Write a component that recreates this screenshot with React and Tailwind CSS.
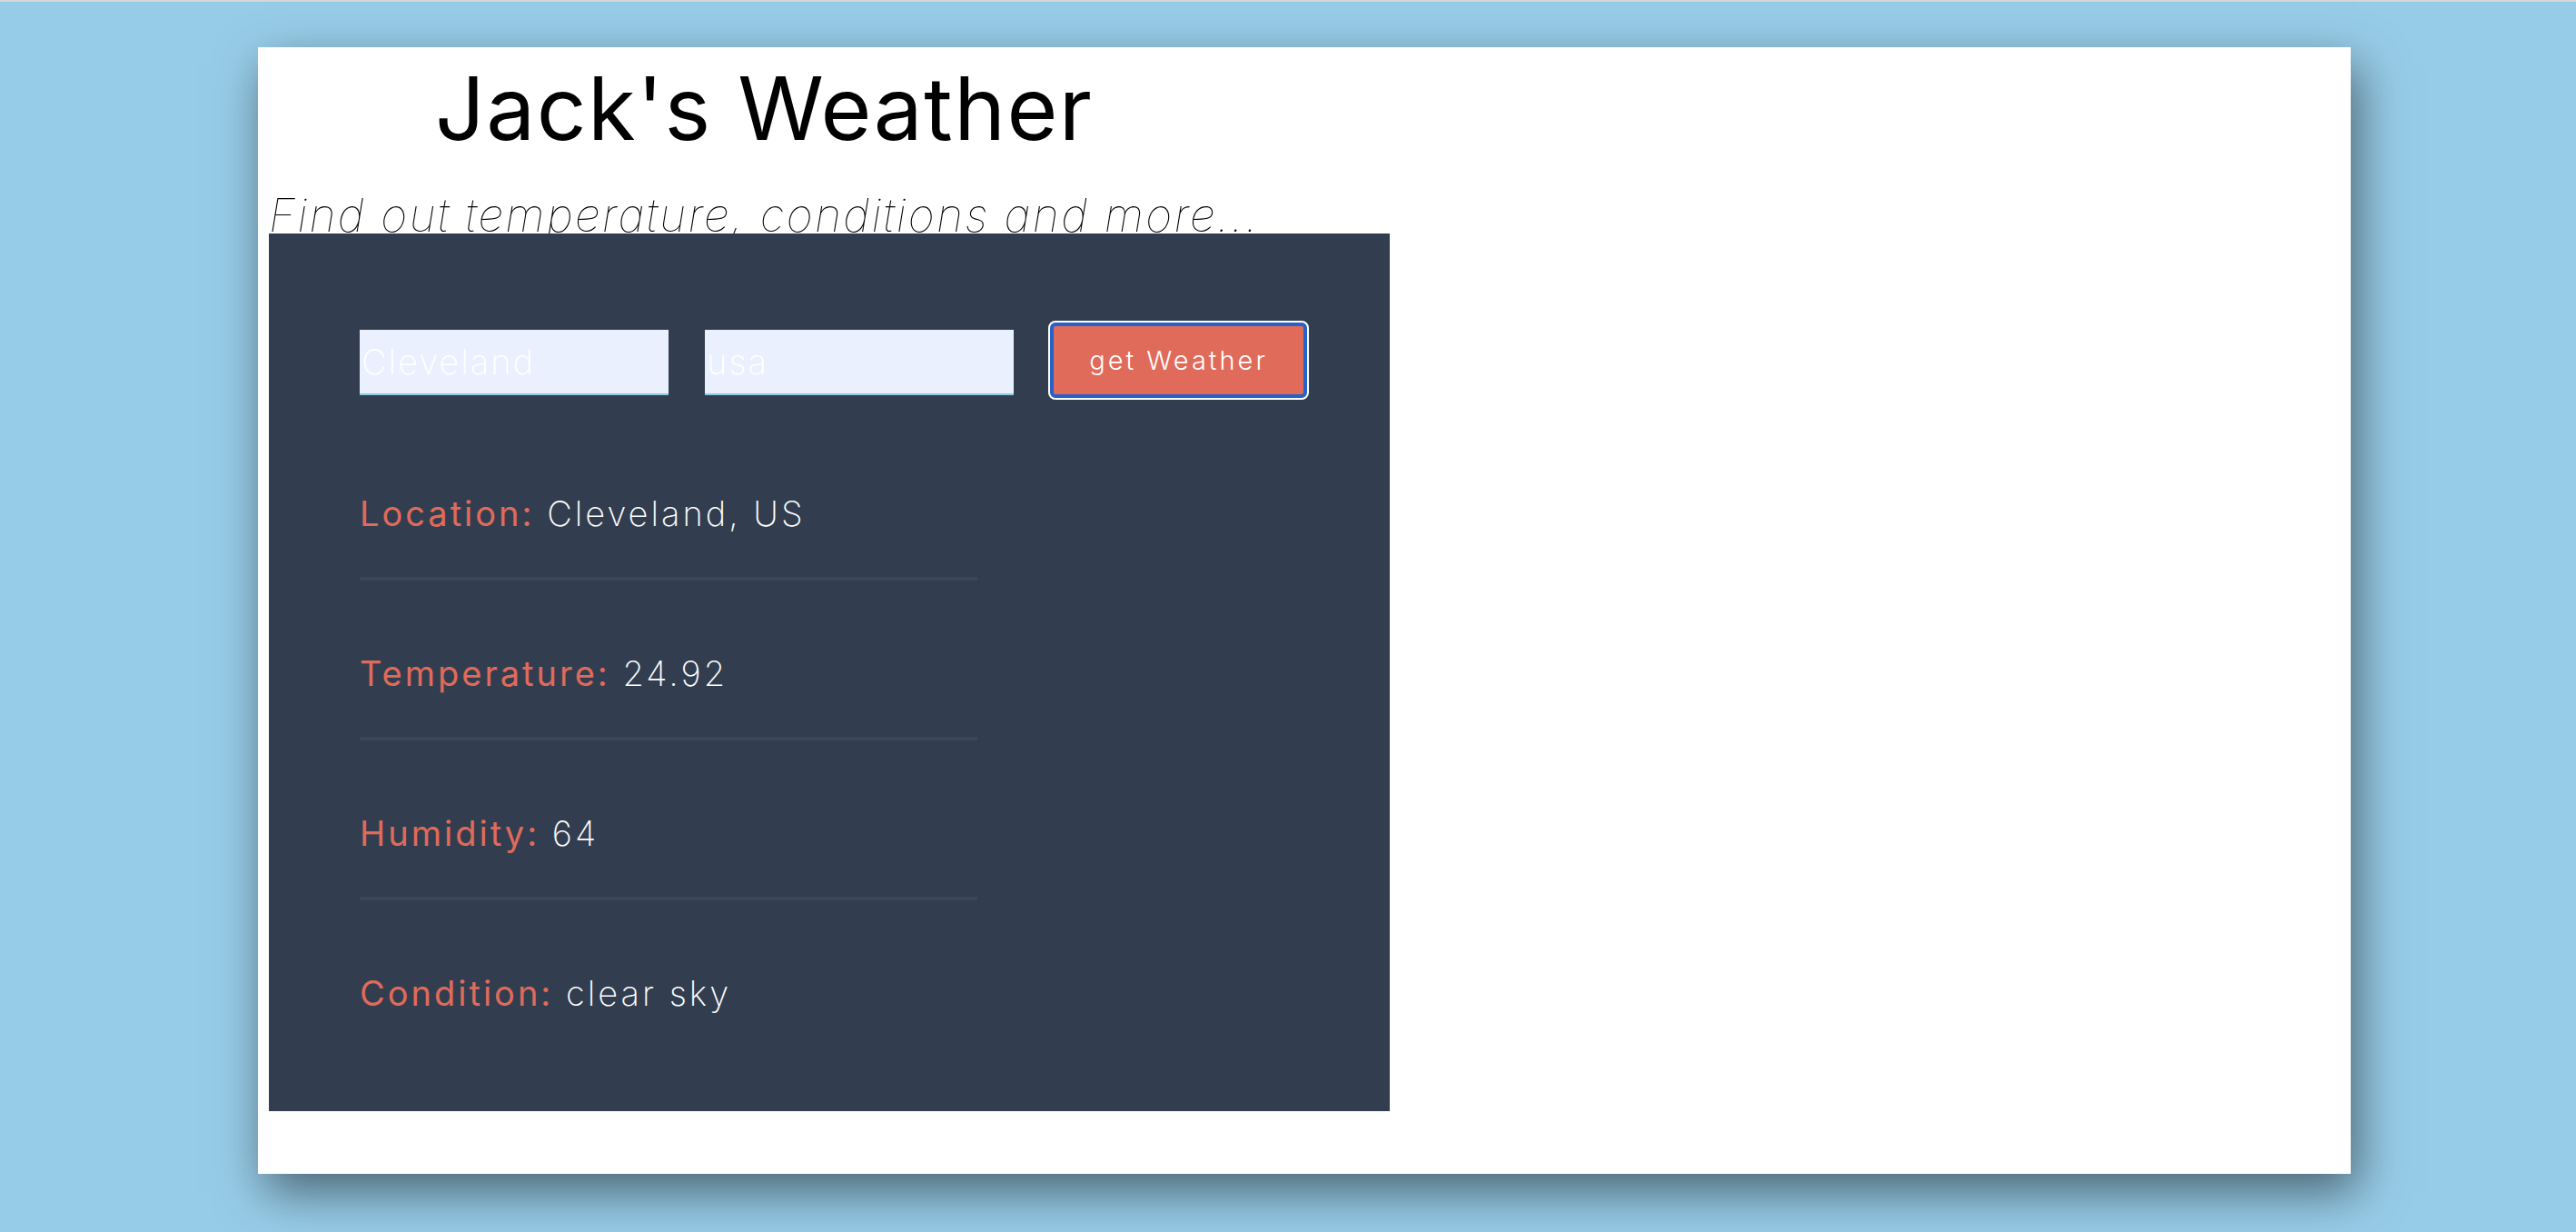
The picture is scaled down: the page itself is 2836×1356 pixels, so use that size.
import React from "react";

const rows = [
  { label: "Location:", value: "Cleveland, US" },
  { label: "Temperature:", value: "24.92" },
  { label: "Humidity:", value: "64" },
  { label: "Condition:", value: "clear sky" },
];

const WeatherRow = ({ label, value, last }) => (
  <div
    className={`w-[680px] pt-[78px] pb-[46px] text-[38px] leading-[48px] tracking-[3px] ${
      last ? "" : "border-b-4 border-[#3b4759]"
    }`}
  >
    <span className="text-[#e06b5a] font-normal">{label}</span>{" "}
    <span className="text-white font-extralight">{value}</span>
  </div>
);

export default function App() {
  return (
    <div className="min-h-screen bg-[#97cce8] font-[Inter,'Liberation_Sans',sans-serif] overflow-hidden">
      <div className="h-[2px] bg-[#d6d6d6]" />
      <div className="ml-[284px] mt-[50px] w-[2304px] h-[1240px] bg-white pl-3 pt-[11px] shadow-[8px_20px_50px_rgba(0,0,0,0.5)]">
        <h1 className="pl-[183px] text-[96px] leading-[112px] tracking-[1.5px] font-normal text-black">
          Jack's Weather
        </h1>
        <p className="mt-[34px] h-[48px] text-[50px] leading-[56px] italic font-thin tracking-[2.2px] text-black whitespace-nowrap">
          Find out temperature, conditions and more...
        </p>
        <div className="relative w-[1234px] bg-[#323e4f] pl-[100px] pt-[98px] pb-[60px]">
          <form
            className="flex items-start gap-10 mb-[25px]"
            onSubmit={(e) => e.preventDefault()}
          >
            <input
              type="text"
              defaultValue="Cleveland"
              className="mt-2 w-[340px] h-[72px] bg-[#eaf0fe] border-b-2 border-[#8ecae6] px-[2px] text-[38px] font-extralight tracking-[2px] text-white outline-none"
            />
            <input
              type="text"
              defaultValue="usa"
              className="mt-2 w-[340px] h-[72px] bg-[#eaf0fe] border-b-2 border-[#8ecae6] px-[2px] text-[38px] font-extralight tracking-[2px] text-white outline-none"
            />
            <button
              type="submit"
              className="w-[283px] h-[83px] rounded-[6px] bg-[#e06b5a] border-4 border-[#2762c9] outline-2 outline-white text-white text-[29px] font-light tracking-[3px]"
            >
              get Weather
            </button>
          </form>
          {rows.map((r, i) => (
            <WeatherRow
              key={r.label}
              label={r.label}
              value={r.value}
              last={i === rows.length - 1}
            />
          ))}
        </div>
      </div>
    </div>
  );
}
